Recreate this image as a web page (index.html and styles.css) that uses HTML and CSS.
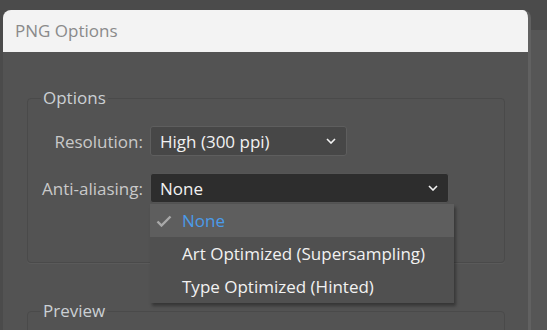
FILE: index.html
```html
<!DOCTYPE html>
<html lang="en">
<head>
    <meta charset="UTF-8">
    <meta name="viewport" content="width=device-width, initial-scale=1.0">
    <title>PNG Options</title>
    <link rel="stylesheet" href="styles.css">
</head>
<body>

    <div class="screen">
        <div class="dialog">
            <div class="titlebar">PNG Options</div>

            <div class="dialog-body">
                <fieldset class="group">
                    <legend>Options</legend>
                    <div class="fields">
                        <label>Resolution:</label>
                        <div class="select select-res">
                            <span>High (300 ppi)</span>
                            <svg class="chevron" viewBox="0 0 10 6" aria-hidden="true">
                                <path d="M1 1l4 4 4-4" fill="none" stroke="currentColor" stroke-width="1.6"/>
                            </svg>
                        </div>

                        <label>Anti-aliasing:</label>
                        <div class="select select-aa open">
                            <span>None</span>
                            <svg class="chevron" viewBox="0 0 10 6" aria-hidden="true">
                                <path d="M1 1l4 4 4-4" fill="none" stroke="currentColor" stroke-width="1.6"/>
                            </svg>

                            <ul class="menu">
                                <li class="selected">
                                    <svg class="check" viewBox="0 0 16 12" aria-hidden="true">
                                        <path d="M1.5 6.5l4 4 9-9" fill="none" stroke="currentColor" stroke-width="2.4"/>
                                    </svg>
                                    None
                                </li>
                                <li>Art Optimized (Supersampling)</li>
                                <li>Type Optimized (Hinted)</li>
                            </ul>
                        </div>
                    </div>
                </fieldset>

                <fieldset class="group preview">
                    <legend>Preview</legend>
                </fieldset>
            </div>
        </div>
        <div class="side"></div>
    </div>

</body>
</html>
```

FILE: styles.css
```css
body{
    margin: 0;
    background-color: #4b4b4b;
    font-family: "Open Sans", "Noto Sans", sans-serif;
    font-size: 17px;
    overflow: hidden;
}
.screen{
    display: flex;
    height: 330px;
    padding-top: 10px;
    padding-left: 3px;
    box-sizing: border-box;
}
.dialog{
    width: 525px;
    background-color: #535353;
    border-radius: 8px 8px 0 0;
    border-right: 3px solid #616161;
    overflow: hidden;
}
.side{
    flex: 1;
    margin-top: 20px;
    background-color: #565656;
}
.titlebar{
    height: 42px;
    background-color: #f3f3f3;
    color: #8a8a8a;
    font-size: 17px;
    line-height: 42px;
    padding-left: 12px;
}
.dialog-body{
    padding: 36px 23px 0 24px;
}
.group{
    margin: 0;
    padding: 18px 14px 0 14px;
    border: 1px solid #4a4a4a;
    border-radius: 4px;
    box-shadow: 0 1px 0 #5a5a5a;
    height: 175px;
    box-sizing: border-box;
}
.group legend{
    color: #cbd0d4;
    padding: 0 2px;
    margin-left: -1px;
    line-height: 20px;
}
.preview{
    margin-top: 38px;
}
.fields{
    display: grid;
    grid-template-columns: auto 1fr;
    column-gap: 7px;
    row-gap: 17px;
    align-items: center;
}
.fields label{
    color: #c9c9c9;
    text-align: right;
}
.select{
    position: relative;
    height: 30px;
    box-sizing: border-box;
    border: 1px solid #5e5e5e;
    border-radius: 3px;
    background-color: #474747;
    color: #f2f2f2;
    display: flex;
    align-items: center;
    justify-content: space-between;
    padding: 0 10px 0 9px;
}
.select-res{
    width: 197px;
}
.select-aa{
    width: 299px;
    background-color: #2d2d2d;
    border-color: #555;
}
.chevron{
    width: 10px;
    height: 6px;
    color: #f2f2f2;
}
.menu{
    position: absolute;
    top: 30px;
    left: -1px;
    width: 304px;
    margin: 0;
    padding: 0;
    list-style: none;
    background-color: #505050;
    box-shadow: 2px 3px 3px rgba(0, 0, 0, 0.35);
    z-index: 2;
}
.menu li{
    position: relative;
    height: 33px;
    line-height: 33px;
    padding-left: 32px;
    color: #f2f2f2;
}
.menu li.selected{
    background-color: #5e5e5e;
    color: #4b9be9;
}
.check{
    position: absolute;
    left: 6px;
    top: 11px;
    width: 16px;
    height: 12px;
    color: #a9a9a9;
}
```
